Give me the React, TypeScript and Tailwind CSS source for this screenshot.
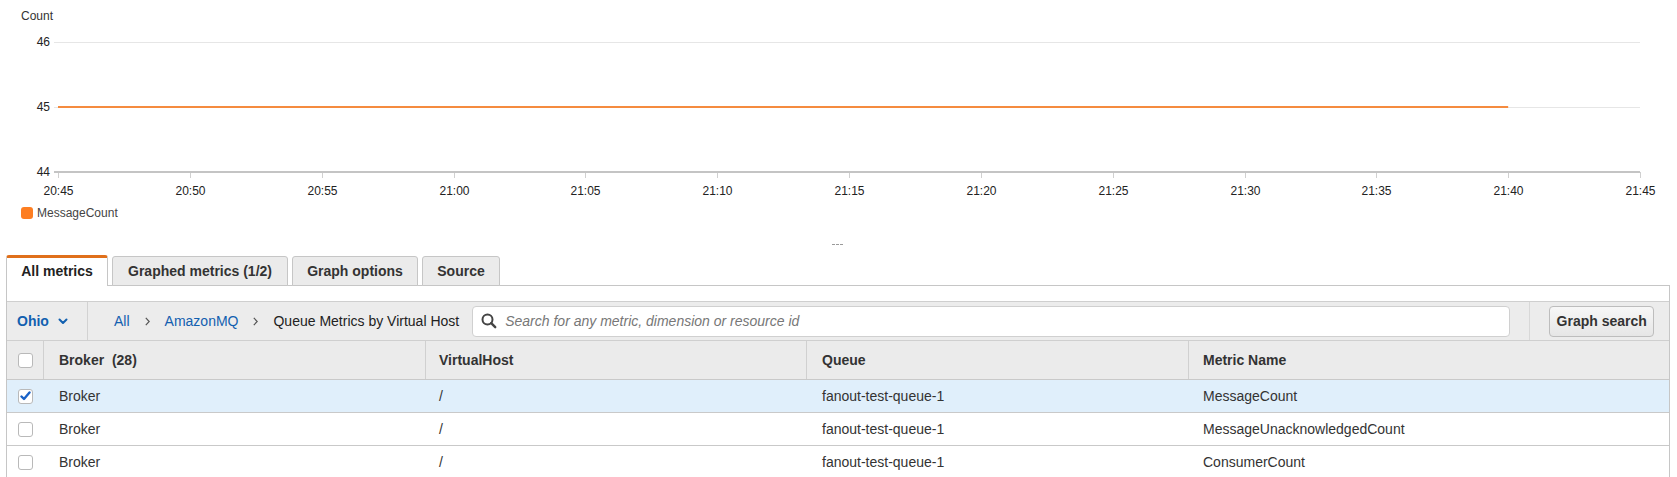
import React from "react";

const xLabels = ["20:45","20:50","20:55","21:00","21:05","21:10","21:15","21:20","21:25","21:30","21:35","21:40","21:45"];

function Chart() {
  const x0 = 58;
  const x1 = 1640;
  const step = (x1 - x0) / 12;
  return (
    <svg width={1677} height={232} className="block" style={{ fontFamily: '"Liberation Sans", Arial, sans-serif' }}>
      <text x={21} y={20} fontSize={12} fill="#333">Count</text>
      <line x1={54} y1={42.5} x2={x1} y2={42.5} stroke="#e6e6e6" strokeWidth={1} />
      <line x1={54} y1={107.5} x2={x1} y2={107.5} stroke="#e6e6e6" strokeWidth={1} />
      <text x={50} y={46} fontSize={12} fill="#222" textAnchor="end">46</text>
      <text x={50} y={111} fontSize={12} fill="#222" textAnchor="end">45</text>
      <text x={50} y={176} fontSize={12} fill="#222" textAnchor="end">44</text>
      {xLabels.map((l, i) => {
        const x = Math.round(x0 + i * step) + 0.5;
        return (
          <g key={l}>
            <line x1={x} y1={172} x2={x} y2={178} stroke="#d0d0d0" strokeWidth={1} />
            <text x={x} y={195} fontSize={12} fill="#222" textAnchor="middle">{l}</text>
          </g>
        );
      })}
      <line x1={54} y1={172} x2={x1} y2={172} stroke="#c4c4c4" strokeWidth={2} />
      <line x1={x0} y1={107} x2={x0 + 11 * step} y2={107} stroke="#f58b3f" strokeWidth={2} />
      <rect x={21} y={207} width={12} height={12} rx={3} fill="#fd7e22" />
      <text x={37} y={217} fontSize={12} fill="#444">MessageCount</text>
    </svg>
  );
}

function Checkbox({ checked }: { checked?: boolean }) {
  return (
    <div className="w-[15px] h-[15px] rounded-[3px] border border-[#b9b9b9] bg-white flex items-center justify-center">
      {checked && (
        <svg width="11" height="10" viewBox="0 0 11 10">
          <path d="M1.5 5.5 L4 8 L9.5 1.5" fill="none" stroke="#1a62c7" strokeWidth="2.4" strokeLinecap="round" strokeLinejoin="round" />
        </svg>
      )}
    </div>
  );
}

function Sep() {
  return (
    <svg width="5" height="9" viewBox="0 0 5 9" className="mx-[15px] shrink-0">
      <path d="M0.8 0.8 L4.2 4.5 L0.8 8.2" fill="none" stroke="#555" strokeWidth="1.2" />
    </svg>
  );
}

const rows = [
  { metric: "MessageCount", checked: true },
  { metric: "MessageUnacknowledgedCount", checked: false },
  { metric: "ConsumerCount", checked: false },
];

const cols = "grid grid-cols-[37px_382px_381px_382px_1fr]";

export default function App() {
  return (
    <div
      className="w-[1677px] h-[477px] bg-white overflow-hidden text-[#333]"
      style={{ fontFamily: '"Liberation Sans", Arial, Helvetica, sans-serif' }}
    >
      <Chart />
      <div className="h-[23px] flex items-center justify-center">
        <div className="flex gap-[1px] ml-[-2px] mt-[1px]">
          <span className="w-[3px] h-[1px] bg-[#9a9a9a]" />
          <span className="w-[3px] h-[1px] bg-[#9a9a9a]" />
          <span className="w-[3px] h-[1px] bg-[#9a9a9a]" />
        </div>
      </div>
      {/* Tabs */}
      <div className="flex items-end gap-[4px] pl-[6px] h-[31px] relative z-10">
        <div className="w-[102px] h-[31px] bg-white border-x border-[#c6c6c6] border-t-[3px] border-t-[#e0701b] rounded-t-[3px] flex items-center justify-center text-[14px] font-bold text-[#222] pb-[1px]">
          All metrics
        </div>
        <div className="w-[176px] h-[30px] bg-[#ebebeb] border border-[#c6c6c6] rounded-t-[3px] flex items-center justify-center text-[14px] font-bold text-[#333]">
          Graphed metrics (1/2)
        </div>
        <div className="w-[126px] h-[30px] bg-[#ebebeb] border border-[#c6c6c6] rounded-t-[3px] flex items-center justify-center text-[14px] font-bold text-[#333]">
          Graph options
        </div>
        <div className="w-[78px] h-[30px] bg-[#ebebeb] border border-[#c6c6c6] rounded-t-[3px] flex items-center justify-center text-[14px] font-bold text-[#333]">
          Source
        </div>
      </div>
      {/* Panel */}
      <div className="ml-[6px] w-[1664px] border border-[#c6c6c6] mt-[-1px]">
        <div className="h-[15px] bg-white" />
        {/* Toolbar */}
        <div className="h-[39px] border-t border-[#cfcfcf] bg-[#ececec] flex items-center">
          <div className="w-[81px] h-full border-r border-[#d2d2d2] flex items-center pl-[10px] gap-[9px] text-[14px] font-bold text-[#1260b0]">
            <span>Ohio</span>
            <svg width="10" height="7" viewBox="0 0 10 7">
              <path d="M1.5 1.5 L5 5 L8.5 1.5" fill="none" stroke="#1260b0" strokeWidth="2" strokeLinecap="round" strokeLinejoin="round" />
            </svg>
          </div>
          <div className="flex items-center text-[14px] pl-[26px] shrink-0">
            <span className="text-[#1260b0]">All</span>
            <Sep />
            <span className="text-[#1260b0]">AmazonMQ</span>
            <Sep />
            <span className="text-[#222]">Queue Metrics by Virtual Host</span>
          </div>
          <div className="ml-[13px] w-[1038px] h-[31px] bg-white border border-[#d0d0d0] rounded-[4px] flex items-center pl-[8px] shrink-0">
            <svg width="16" height="16" viewBox="0 0 16 16" className="shrink-0">
              <circle cx="6.5" cy="6.5" r="5" fill="none" stroke="#444" strokeWidth="2" />
              <path d="M10.2 10.2 L14.2 14.2" stroke="#444" strokeWidth="2.4" strokeLinecap="round" />
            </svg>
            <span className="ml-[8px] text-[14px] italic text-[#777]">Search for any metric, dimension or resource id</span>
          </div>
          <div className="ml-[19px] w-[1px] h-full bg-[#d8d8d8] shrink-0" />
          <div className="ml-[19px] w-[105px] h-[31px] rounded-[4px] border border-[#bdbdbd] bg-gradient-to-b from-[#f7f7f7] to-[#e6e6e6] flex items-center justify-center text-[14px] font-bold text-[#333] shrink-0">
            Graph search
          </div>
        </div>
        {/* Header */}
        <div className={`${cols} h-[39px] bg-[#ebebeb] border-t border-[#cfcfcf] text-[14px] font-bold text-[#333]`}>
          <div className="flex items-center justify-center border-r border-[#d0d0d0]">
            <Checkbox />
          </div>
          <div className="flex items-center pl-[15px] border-r border-[#d0d0d0]">Broker&nbsp;&nbsp;(28)</div>
          <div className="flex items-center pl-[13px] border-r border-[#d0d0d0]">VirtualHost</div>
          <div className="flex items-center pl-[15px] border-r border-[#d0d0d0]">Queue</div>
          <div className="flex items-center pl-[14px]">Metric Name</div>
        </div>
        {rows.map((r, i) => (
          <div
            key={i}
            className={`${cols} h-[33px] border-t border-[#c9c9c9] text-[14px] text-[#333] ${r.checked ? "bg-[#e0effb]" : "bg-white"}`}
          >
            <div className="flex items-center justify-center">
              <Checkbox checked={r.checked} />
            </div>
            <div className="flex items-center pl-[15px]">Broker</div>
            <div className="flex items-center pl-[13px]">/</div>
            <div className="flex items-center pl-[15px]">fanout-test-queue-1</div>
            <div className="flex items-center pl-[14px]">{r.metric}</div>
          </div>
        ))}
      </div>
    </div>
  );
}
